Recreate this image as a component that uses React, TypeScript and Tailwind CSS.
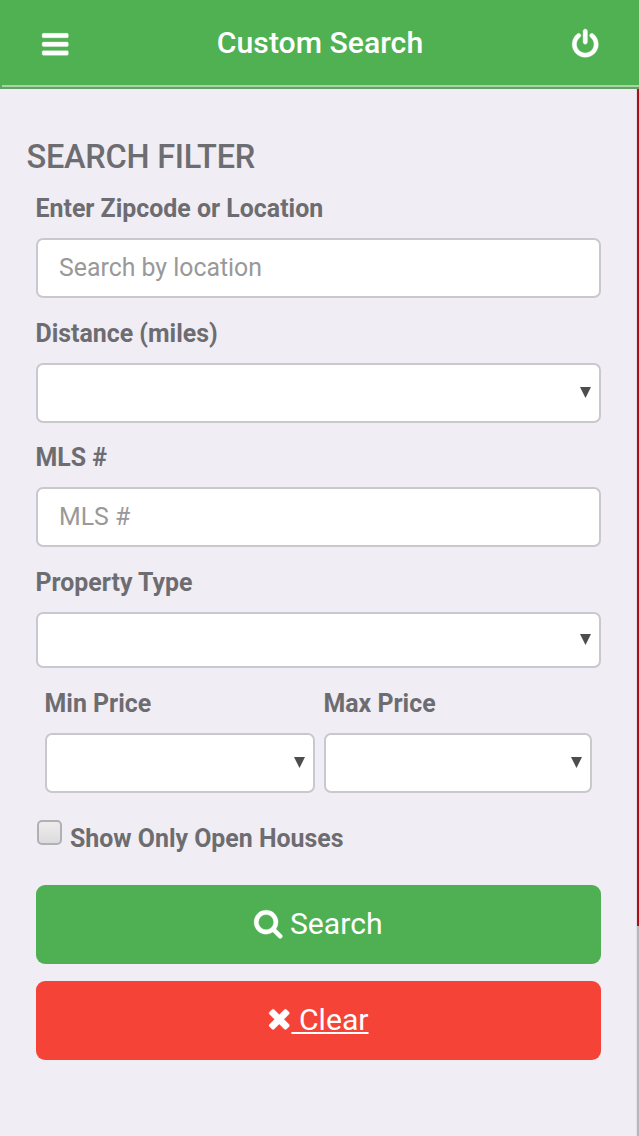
import type { ReactNode } from "react";
import { clsx } from "clsx";

const ICONS = {
  bars: "M1664 1344v128q0 26-19 45t-45 19h-1408q-26 0-45-19t-19-45v-128q0-26 19-45t45-19h1408q26 0 45 19t19 45zm0-512v128q0 26-19 45t-45 19h-1408q-26 0-45-19t-19-45v-128q0-26 19-45t45-19h1408q26 0 45 19t19 45zm0-512v128q0 26-19 45t-45 19h-1408q-26 0-45-19t-19-45v-128q0-26 19-45t45-19h1408q26 0 45 19t19 45z",
  power: "M1664 896q0 156-61 298t-164 245-245 164-298 61-298-61-245-164-164-245-61-298q0-182 80.5-343t226.5-270q43-32 95.5-25t83.5 50q32 42 24.5 94.5t-49.5 84.5q-98 74-151.5 181t-53.5 228q0 104 40.5 198.5t109.5 163.5 163.5 109.5 198.5 40.5 198.5-40.5 163.5-109.5 109.5-163.5 40.5-198.5q0-121-53.5-228t-151.5-181q-42-32-49.5-84.5t24.5-94.5q31-43 84-50t95 25q146 109 226.5 270t80.5 343zm-640-768v640q0 52-38 90t-90 38-90-38-38-90v-640q0-52 38-90t90-38 90 38 38 90z",
  search: "M1216 832q0-185-131.5-316.5t-316.5-131.5-316.5 131.5-131.5 316.5 131.5 316.5 316.5 131.5 316.5-131.5 131.5-316.5zm512 832q0 52-38 90t-90 38q-54 0-90-38l-343-342q-179 124-399 124-143 0-273.5-55.5t-225-150-150-225-55.5-273.5 55.5-273.5 150-225 225-150 273.5-55.5 273.5 55.5 225 150 150 225 55.5 273.5q0 220-124 399l343 343q37 37 37 90z",
  times: "M1490 1322q0 40-28 68l-136 136q-28 28-68 28t-68-28l-294-294-294 294q-28 28-68 28t-68-28l-136-136q-28-28-28-68t28-68l294-294-294-294q-28-28-28-68t28-68l136-136q28-28 68-28t68 28l294 294 294-294q28-28 68-28t68 28l136 136q28 28 28 68t-28 68l-294 294 294 294q28 28 28 68z",
};

function Icon({ name, className }: { name: keyof typeof ICONS; className?: string }) {
  return (
    <svg
      viewBox="0 0 1792 1792"
      fill="currentColor"
      stroke="currentColor"
      strokeWidth={20}
      className={clsx("size-[30.5px] shrink-0 overflow-visible", className)}
    >
      <path d={ICONS[name]} />
    </svg>
  );
}

interface FieldProps {
  label: string;
  children: ReactNode;
  className?: string;
}

function Field({ label, children, className }: FieldProps) {
  return (
    <div className={className}>
      <label className="-ml-[0.5px] block h-[50px] pt-px text-[24.9px] leading-10 font-bold whitespace-nowrap">{label}</label>
      {children}
    </div>
  );
}

const BOX = "w-full rounded-[7px] border-2 border-[#c9c8cc] bg-white";

function TextInput({ placeholder }: { placeholder: string }) {
  return (
    <input
      type="text"
      placeholder={placeholder}
      className={clsx(BOX, "block h-[60px] px-[21px] pb-px text-[24.85px] outline-none placeholder:text-[#999999]")}
    />
  );
}

function Select({ className = "h-[60px]" }: { className?: string }) {
  return (
    <button type="button" className={clsx(BOX, "flex items-center justify-end pr-[8.5px] pb-px", className)}>
      <svg viewBox="0 0 11 11" className="size-[11px] fill-[#4d4d4d]">
        <path d="M0 0h11L5.5 11z" />
      </svg>
    </button>
  );
}

export default function App() {
  return (
    <div className="flex h-[1136px] w-[639px] flex-col overflow-hidden bg-[#f0eef4] font-['Roboto',sans-serif] text-[#6d6c71]">
      {/* Header */}
      <header className="h-[89px] shrink-0 bg-[#50b152] text-white">
        <div className="flex h-[85px] items-start justify-between pl-[39.5px] pr-[38.5px]">
          <button className="mt-[29px]"><Icon name="bars" /></button>
          <h1 className="mt-[23px] text-[30.2px] leading-10 font-medium">Custom Search</h1>
          <button className="mt-[28.5px]"><Icon name="power" /></button>
        </div>
        <div className="ml-0.5 h-0.5 bg-[#a9d5a4]" />
        <div className="h-0.5 bg-[#64a067]" />
      </header>

      <div className="flex flex-1">
        <main className="flex-1 pt-12">
          <h2 className="pl-[26.5px] text-[32.5px] leading-10 font-medium tracking-[-0.25px]">SEARCH FILTER</h2>

          <form className="mt-[11px] ml-9 w-[565px]">
            <Field label="Enter Zipcode or Location">
              <TextInput placeholder="Search by location" />
            </Field>
            <Field label="Distance (miles)" className="mt-[15px]">
              <Select />
            </Field>
            <Field label="MLS #" className="mt-[14px]">
              <TextInput placeholder="MLS #" />
            </Field>
            <Field label="Property Type" className="mt-[15px]">
              <Select className="h-[56px]" />
            </Field>

            <div className="mt-[15px] ml-[9px] flex gap-[9px]">
              <Field label="Min Price" className="w-[270px]">
                <Select />
              </Field>
              <Field label="Max Price" className="w-[268px]">
                <Select />
              </Field>
            </div>

            <label className="mt-[25px] flex h-10 items-start pl-px">
              <span className="mt-0.5 size-[25px] rounded-[5px] border-2 border-[#b1b0b3] bg-linear-to-b from-[#ededed] to-[#dcdcdc]" />
              <span className="mt-px ml-2 text-[24.9px] leading-10 font-bold">Show Only Open Houses</span>
            </label>

            <button type="button" className="mt-[27px] flex h-[79px] w-full items-start justify-center rounded-[9px] bg-[#4eb052] pr-px text-white">
              <Icon name="search" className="mt-[22.5px]" />
              <span className="ml-[6px] mt-[18.5px] text-[30.2px] leading-10">Search</span>
            </button>
            <button type="button" className="mt-[17px] flex h-[79px] w-full items-start justify-center rounded-[9px] bg-[#f54337] pr-[4px] text-white">
              <Icon name="times" className="mt-[22px]" />
              <span className="-ml-[3.5px] mt-[18.5px] text-[30.2px] leading-10 whitespace-pre underline decoration-[1.5px] underline-offset-2"> Clear</span>
            </button>
          </form>
        </main>

        {/* Scroll track */}
        <div className="flex w-[3px] flex-col border-l border-[#e6e0e6]">
          <div className="h-[837px] bg-[#aa1018]" />
          <div className="flex-1 bg-[#b9b8bd]" />
        </div>
      </div>
    </div>
  );
}
